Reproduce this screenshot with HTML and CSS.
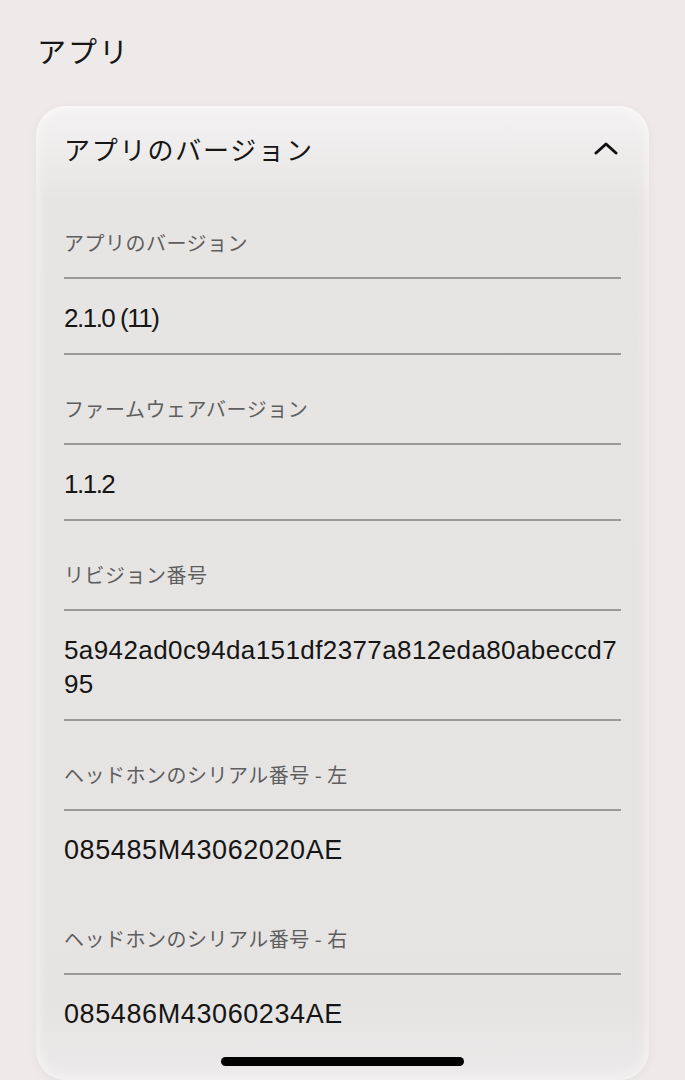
FILE: index.html
```html
<!DOCTYPE html>
<html lang="ja">
<head>
  <meta charset="UTF-8">
  <meta name="viewport" content="width=device-width, initial-scale=1.0">
  <title>アプリ</title>
  <link rel="stylesheet" href="styles.css">
</head>
<body>
  <h1 class="page-title">アプリ</h1>

  <!-- Version card -->
  <section class="card">
    <div class="card-header">
      <h2>アプリのバージョン</h2>
      <svg class="chevron" width="24" height="14" viewBox="0 0 24 14">
        <polyline points="2,12 12,3 22,12" fill="none" stroke="#111" stroke-width="3" stroke-linecap="round" stroke-linejoin="round"/>
      </svg>
    </div>

    <div class="cell label">アプリのバージョン</div>
    <div class="cell value tight">2.1.0 (11)</div>

    <div class="cell label">ファームウェアバージョン</div>
    <div class="cell value tight">1.1.2</div>

    <div class="cell label">リビジョン番号</div>
    <div class="cell value hash">5a942ad0c94da151df2377a812eda80abeccd795</div>

    <div class="cell label">ヘッドホンのシリアル番号 - 左</div>
    <div class="cell value serial plain">085485M43062020AE</div>

    <div class="cell label">ヘッドホンのシリアル番号 - 右</div>
    <div class="cell value serial plain">085486M43060234AE</div>
  </section>

  <div class="home-bar"></div>
</body>
</html>
```

FILE: styles.css
```css
body {
  margin: 0;
  padding: 0;
  background: #eeeae9;
  font-family: "Noto Sans CJK JP", "Liberation Sans", sans-serif;
  color: #161616;
  height: 1080px;
  overflow: hidden;
  position: relative;
}

.page-title {
  margin: 0;
  padding: 30px 0 0 37px;
  font-size: 29px;
  font-weight: 400;
  line-height: 40px;
  letter-spacing: 2px;
}

.card {
  margin: 36px 36px 0 36px;
  padding: 0 28px 31px 28px;
  border-radius: 30px;
  background: linear-gradient(#f4f2f2 0, #e7e5e4 95px, #e6e4e3 calc(100% - 70px), #eceaea 100%);
  box-shadow: 0 2px 10px rgba(0, 0, 0, 0.05), inset 0 0 14px rgba(255, 255, 255, 0.7);
}

.card-header {
  display: flex;
  justify-content: space-between;
  align-items: center;
  height: 83px;
}

.card-header h2 {
  margin: 0;
  font-size: 26px;
  font-weight: 400;
  letter-spacing: 1.8px;
  padding-top: 2px;
}

.chevron {
  margin-right: 3px;
  margin-top: 1px;
}

.cell {
  border-bottom: 2px solid #9a9a9a;
}

.label {
  padding: 40px 0 20px 0;
  font-size: 20px;
  line-height: 28px;
  color: #5e5e5e;
  letter-spacing: 0.5px;
}

.value {
  padding: 22px 0 18px 0;
  font-family: "Liberation Sans", sans-serif;
  font-size: 26px;
  line-height: 34px;
  letter-spacing: 0.4px;
  color: #151515;
}

.tight {
  letter-spacing: -1.5px;
}

.hash {
  word-break: break-all;
}

.serial {
  font-size: 27px;
  letter-spacing: 0.6px;
}

.value.plain {
  border-bottom: none;
}

.home-bar {
  position: absolute;
  left: 221px;
  top: 1057px;
  width: 243px;
  height: 9px;
  border-radius: 5px;
  background: #000;
}
```
